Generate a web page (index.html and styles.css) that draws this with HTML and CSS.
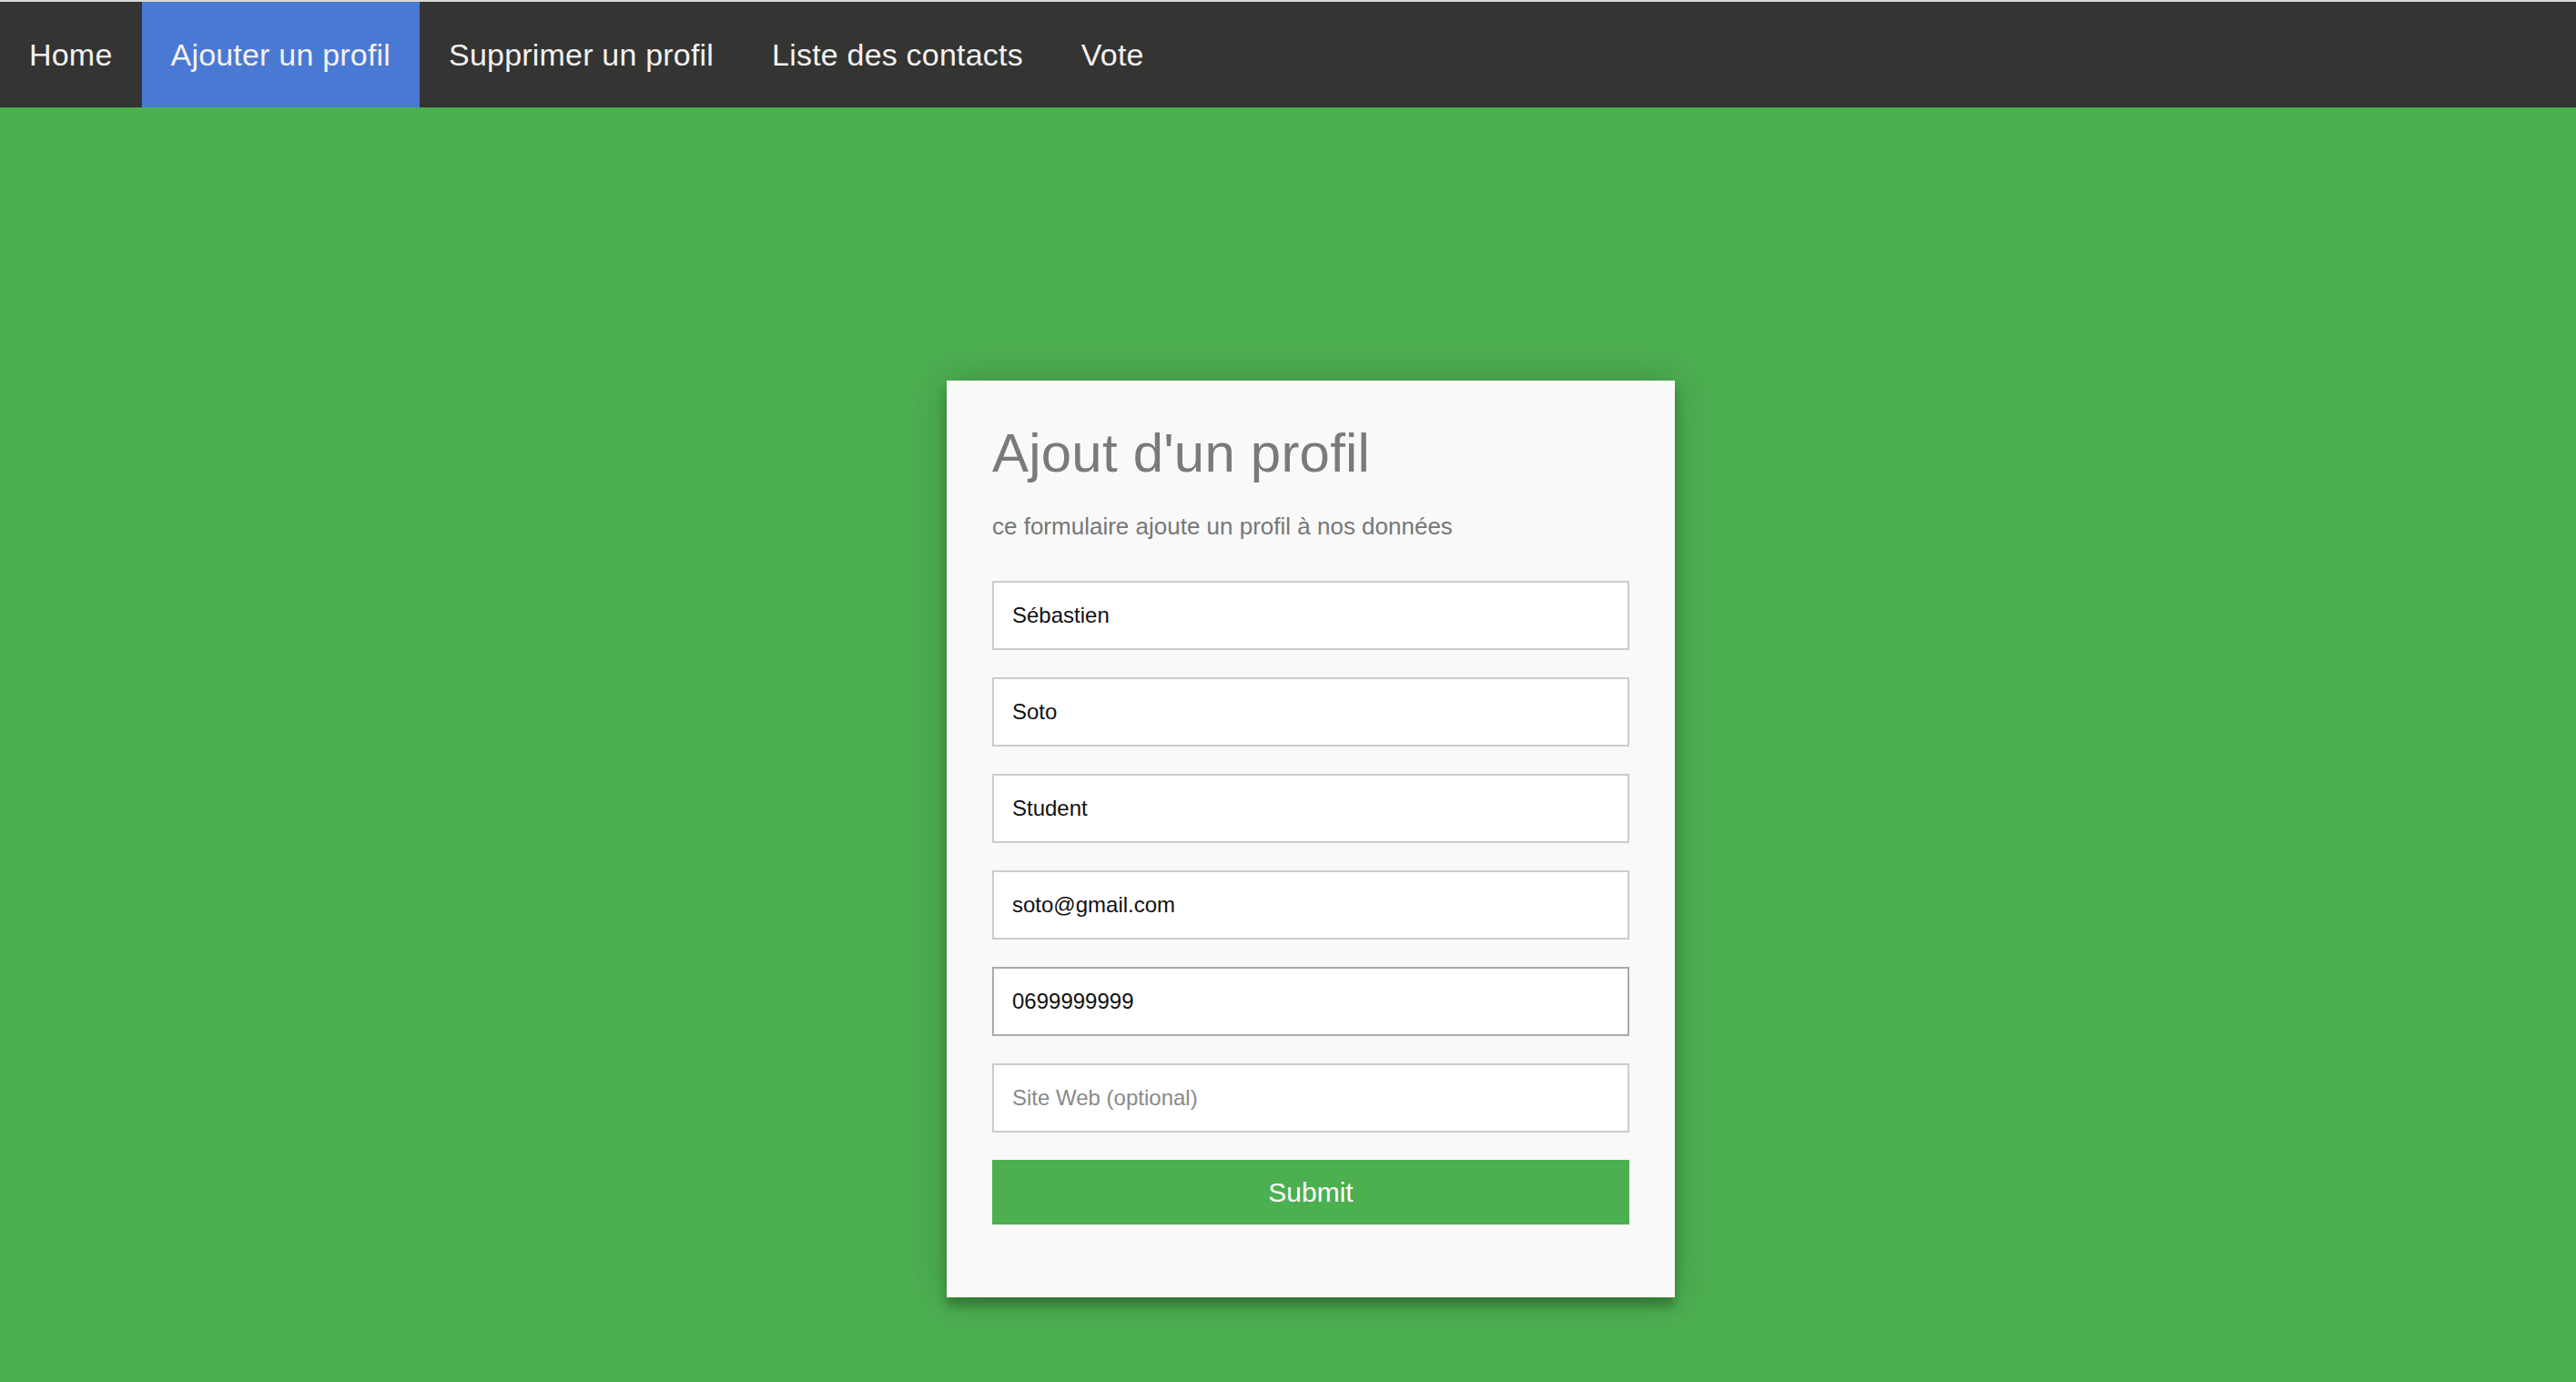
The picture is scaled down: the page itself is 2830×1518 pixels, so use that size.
FILE: index.html
```html
<!DOCTYPE html>
<html lang="fr">
<head>
<meta charset="utf-8">
<title>Ajout d'un profil</title>
<link rel="stylesheet" href="styles.css">
</head>
<body>
<nav class="topnav">
  <a href="#">Home</a>
  <a href="#" class="active">Ajouter un profil</a>
  <a href="#">Supprimer un profil</a>
  <a href="#">Liste des contacts</a>
  <a href="#">Vote</a>
</nav>
<div class="container">
  <form class="contact">
    <h3 class="title">Ajout d'un profil</h3>
    <h4 class="subtitle">ce formulaire ajoute un profil à nos données</h4>
    <fieldset class="field"><input class="input" type="text" value="Sébastien"></fieldset>
    <fieldset class="field"><input class="input" type="text" value="Soto"></fieldset>
    <fieldset class="field"><input class="input" type="text" value="Student"></fieldset>
    <fieldset class="field"><input class="input" type="email" value="soto@gmail.com"></fieldset>
    <fieldset class="field"><input class="input input-hover" type="tel" value="0699999999"></fieldset>
    <fieldset class="field"><input class="input" type="url" placeholder="Site Web (optional)"></fieldset>
    <fieldset class="field"><button class="submit" type="button">Submit</button></fieldset>
  </form>
</div>
</body>
</html>
```
FILE: styles.css
```css
* {
  box-sizing: border-box;
}

body {
  margin: 0;
  background: #4caf50;
  font-family: "Liberation Sans", Helvetica, Arial, sans-serif;
  font-size: 24px;
  line-height: 60px;
  color: #777;
}

.topnav {
  display: flex;
  background: #343432;
  border-top: 2px solid #d9d9d9;
}

.topnav a {
  display: block;
  color: #f2f2f2;
  padding: 28px 32px;
  font-size: 34px;
  line-height: 60px;
  letter-spacing: 0.2px;
  text-decoration: none;
}

.topnav a.active {
  background: #4a79d4;
}

.container {
  width: 850px;
  padding-left: 50px;
  margin: 0 auto;
}

.contact {
  background: #f9f9f9;
  padding: 50px;
  margin: 300px 0;
  box-shadow: 0 0 40px 0 rgba(0, 0, 0, 0.2), 0 10px 10px 0 rgba(0, 0, 0, 0.24);
}

.title {
  display: block;
  margin: 0 0 20px;
  font-size: 60px;
  line-height: 60px;
  font-weight: 300;
  letter-spacing: 0.2px;
  color: #7a7a7a;
}

.subtitle {
  display: block;
  margin: 10px 0 30px;
  font-size: 26px;
  line-height: 60px;
  font-weight: 400;
  color: #777;
}

.field {
  border: none;
  margin: 0 0 20px;
  padding: 0;
  min-width: 100%;
  width: 100%;
}

.input {
  display: block;
  width: 100%;
  border: 2px solid #ccc;
  background: #fff;
  margin: 0 0 10px;
  padding: 20px;
  font-family: "Liberation Sans", Helvetica, Arial, sans-serif;
  font-size: 24px;
  line-height: 32px;
  color: #111;
  outline: none;
}

.input::placeholder {
  color: #8a8a8a;
}

.input-hover {
  border-color: #aaa;
}

.submit {
  display: block;
  width: 100%;
  border: none;
  background: #4caf50;
  color: #fff;
  margin: 0 0 10px;
  padding: 20px;
  font-family: "Liberation Sans", Helvetica, Arial, sans-serif;
  font-size: 30px;
  line-height: 31px;
}
```
